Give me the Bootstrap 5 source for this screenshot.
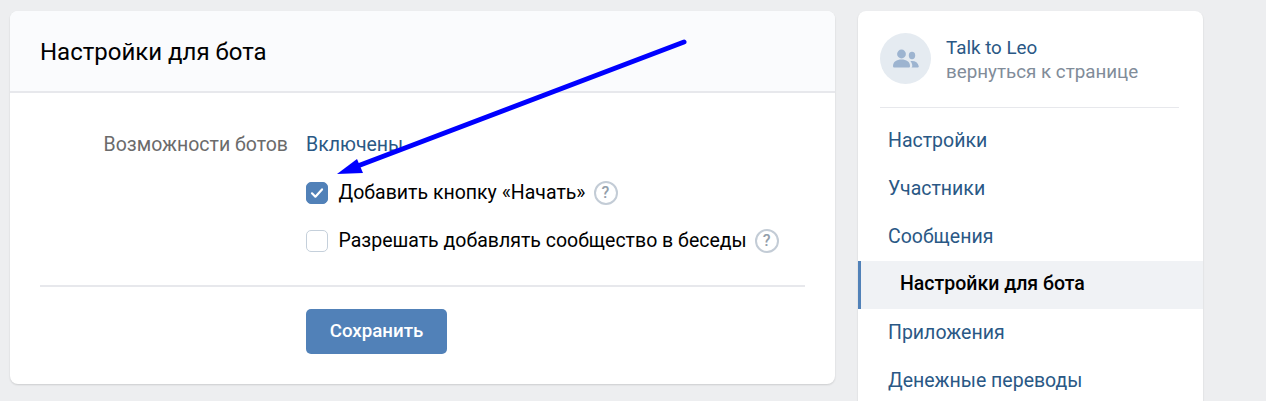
<!DOCTYPE html>
<html lang="ru">
  <head>
    <meta charset="UTF-8" />
    <title>Настройки для бота</title>
    <link href="https://cdn.jsdelivr.net/npm/bootstrap@5.3.3/dist/css/bootstrap.min.css" rel="stylesheet" crossorigin="anonymous" />
    <style>
      html, body { height: 401px; overflow: hidden; }
      body { background: #edeef0; font-family: Roboto, "Liberation Sans", sans-serif; font-size: 19.5px; color: #000; }
      .page-wrap { padding: 11px 0 0 10px; gap: 23px; width: 1266px; height: 401px; overflow: hidden; }
      .main-box { width: 825px; height: 373px; border: 0; border-radius: 8px; box-shadow: 0 1px 2px rgba(0,0,0,.14); }
      .main-box .card-header { height: 82px; padding: 0 30px; background: #fafbfd; border-bottom: 2px solid #e7e8ec; border-radius: 8px 8px 0 0; font-size: 24px; line-height: 82px; }
      .form-area { padding: 0 30px; }
      .form-row { height: 48px; }
      .first-row { margin-top: 28px; }
      .row-label { width: 248px; padding-right: 0; text-align: right; color: #6b6b6b; }
      .row-value { margin-left: 18px; }
      .state-link { color: #2a5885; }
      .tick { width: 22px; height: 22px; border-radius: 5px; border: 1.5px solid #c5d0db; background: #fff; flex: none; }
      .tick-on { background: #5181b8; border-color: #5181b8; }
      .tick-text { margin-left: 10.500px; }
      .help-mark { width: 24px; height: 24px; border-radius: 50%; border: 2px solid #c3ccd6; color: #939eaa; font-size: 16px; font-weight: 500; margin-left: 8px; flex: none; }
      .form-sep { border-top: 2px solid #e7e8ec; margin-top: 20px; }
      .save-btn { margin: 22px 0 0 266px; width: 141px; height: 45px; background: #5181b8; border: 0; border-radius: 5px; color: #fff; font-size: 18.7px; font-weight: 500; }
      .save-btn:hover { background: #5181b8; color: #fff; }
      .side-box { width: 345px; height: 390px; border: 0; border-radius: 8px 8px 0 0; box-shadow: 0 1px 2px rgba(0,0,0,.14); overflow: hidden; }
      .side-head { padding: 22px 22px 23px 22px; height: 97px; margin-bottom: 9px; position: relative; }
      .side-head::after { content: ""; position: absolute; left: 22px; right: 24px; bottom: 0; border-bottom: 1px solid #e7e8ec; }
      .side-ava { width: 51px; height: 51px; background: #e5ebf1; flex: none; }
      .side-title { color: #2a5885; line-height: 23px; font-size: 18.8px; }
      .side-sub { color: #818c99; line-height: 25px; font-size: 18.8px; }
      .side-name { margin-left: 15px; margin-top: 4px; }
      .side-item { height: 48px; line-height: 48px; padding: 0 0 0 30px; color: #2a5885; border: 0; border-radius: 0 !important; background: transparent; font-size: 19.5px; white-space: nowrap; }
      .list-group-item + .side-item.active { background: #f0f2f5; color: #000; font-weight: 500; line-height: 46px; padding-left: 39px; border-left: 3px solid #5181b8; margin-top: 0; z-index: 0; }
      .arrow-layer { position: absolute; left: 0; top: 0; pointer-events: none; }
    </style>
  </head>
  <body>
    <div class="d-flex align-items-start page-wrap">
      <div class="card main-box">
        <div class="card-header">Настройки для бота</div>
        <div class="form-area">
          <div class="d-flex align-items-center form-row first-row">
            <div class="row-label">Возможности ботов</div>
            <div class="row-value state-link">Включены</div>
          </div>
          <div class="d-flex align-items-center form-row">
            <div class="row-label"></div>
            <div class="row-value d-flex align-items-center">
              <span class="tick tick-on d-flex align-items-center justify-content-center">
                <svg width="14" height="12" viewBox="0 0 14 12"><path d="M2 6.3l3.4 3.4L12 2.4" fill="none" stroke="#fff" stroke-width="2.2" stroke-linecap="round" stroke-linejoin="round"/></svg>
              </span>
              <span class="tick-text">Добавить кнопку «Начать»</span>
              <span class="help-mark d-flex align-items-center justify-content-center">?</span>
            </div>
          </div>
          <div class="d-flex align-items-center form-row">
            <div class="row-label"></div>
            <div class="row-value d-flex align-items-center">
              <span class="tick"></span>
              <span class="tick-text">Разрешать добавлять сообщество в беседы</span>
              <span class="help-mark d-flex align-items-center justify-content-center">?</span>
            </div>
          </div>
          <div class="form-sep"></div>
          <button type="button" class="btn save-btn p-0">Сохранить</button>
        </div>
      </div>
      <div class="card side-box">
        <div class="d-flex align-items-start side-head">
          <div class="side-ava rounded-circle d-flex align-items-center justify-content-center">
            <svg width="26" height="20" viewBox="0 0 26 20" fill="#9db4d0">
              <circle cx="8.5" cy="5" r="4.4"/>
              <path d="M0 17c0-4 3.5-6.4 8.5-6.4S17 13 17 17c0 1-.5 1.6-1.5 1.6h-14C.5 18.600 0 18 0 17z"/>
              <ellipse cx="19" cy="6.500" rx="3.200" ry="3.700"/>
              <path d="M18.500 18.600h5.600c1.200 0 1.900-.6 1.600-1.700-.7-2.900-3.100-4.900-6.700-4.900-.6 0-1.100 0-1.600.2 1.300 1.300 1.900 3 1.900 4.800 0 .6-.2 1.100-.8 1.600z"/>
            </svg>
          </div>
          <div class="side-name">
            <div class="side-title">Talk to Leo</div>
            <div class="side-sub">вернуться к странице</div>
          </div>
        </div>
        <div class="list-group list-group-flush">
          <a class="list-group-item side-item" href="#">Настройки</a>
          <a class="list-group-item side-item" href="#">Участники</a>
          <a class="list-group-item side-item" href="#">Сообщения</a>
          <a class="list-group-item side-item active" href="#">Настройки для бота</a>
          <a class="list-group-item side-item" href="#">Приложения</a>
          <a class="list-group-item side-item" href="#">Денежные переводы</a>
        </div>
      </div>
    </div>
    <svg class="arrow-layer" width="1266" height="401" viewBox="0 0 1266 401">
      <path d="M684 42L355 167" fill="none" stroke="#0000ff" stroke-width="5" stroke-linecap="round"/>
      <path d="M337 174L357 159L363 173Z" fill="#0000ff"/>
    </svg>
    <script src="https://cdn.jsdelivr.net/npm/bootstrap@5.3.3/dist/js/bootstrap.bundle.min.js" crossorigin="anonymous"></script>
  </body>
</html>
